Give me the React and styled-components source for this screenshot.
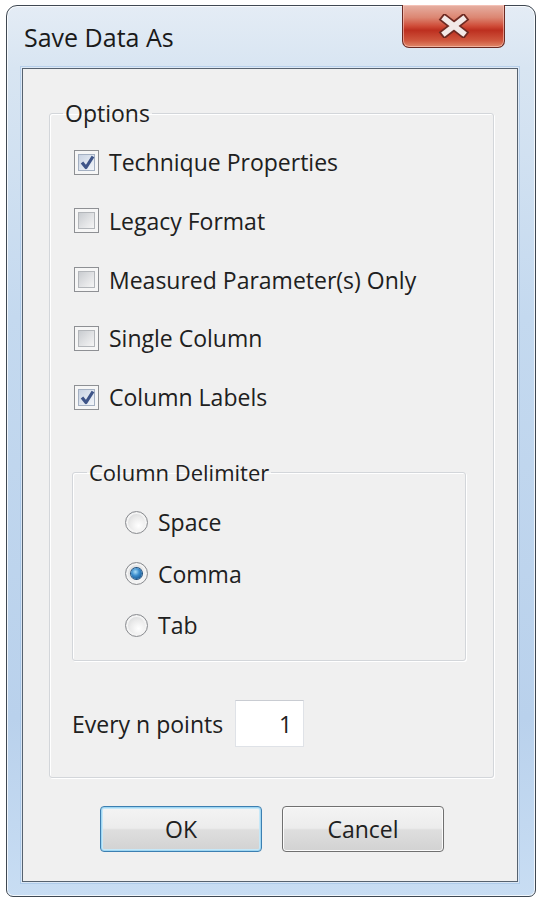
import React from "react";
import styled, { createGlobalStyle } from "styled-components";

const GlobalStyle = createGlobalStyle`
  html, body { margin: 0; padding: 0; background: #ffffff; }
  body { font-family: "Open Sans", "Noto Sans", "DejaVu Sans", sans-serif; color: #202020; }
  * { box-sizing: border-box; }
`;

const Window = styled.div`
  width: 530px;
  height: 892px;
  margin: 5px 0 0 6px;
  border: 1px solid #3f4852;
  border-radius: 11px 11px 7px 7px;
  background: linear-gradient(180deg, #e4ecf5 0%, #d8e5f2 7%, #c4d9ef 35%, #b9d1ec 80%, #c8ddf3 100%);
  box-shadow: inset 0 0 0 1px rgba(255, 255, 255, 0.75);
  padding: 0 17px 14px 15px;
  display: flex;
  flex-direction: column;
`;

const TitleBar = styled.div`
  height: 62px;
  display: flex;
  justify-content: space-between;
  align-items: flex-start;
`;

const Title = styled.div`
  font-size: 25px;
  line-height: 30px;
  margin: 16px 0 0 2px;
  color: #1a1a1a;
`;

const CloseButton = styled.div`
  width: 103px;
  height: 43px;
  margin: -1px 13px 0 0;
  border: 1px solid #6a2a22;
  border-top: none;
  border-radius: 0 0 7px 7px;
  background: linear-gradient(180deg, #e6b0a3 0%, #dc8672 30%, #cf4c38 50%, #bd2f1f 60%, #cf573e 85%, #e0896a 100%);
  box-shadow: inset 0 0 0 1px rgba(255, 210, 200, 0.55);
  display: flex;
  align-items: center;
  justify-content: center;
`;

const Client = styled.div`
  flex: 1;
  background: #f0f0f0;
  border: 1px solid #56626f;
  box-shadow: 0 0 0 1px rgba(255, 255, 255, 0.55), 0 0 0 2px rgba(150, 185, 225, 0.5);
  padding: 31px 23px 0 26px;
  display: flex;
  flex-direction: column;
`;

const GroupBox = styled.fieldset`
  margin: ${(p) => p.$margin || "0"};
  padding: ${(p) => p.$padding || "0"};
  border: 1px solid #d3d6da;
  border-radius: 3px;
  box-shadow: inset 1px 1px 0 #ffffff, 1px 1px 0 #ffffff;
  min-width: 0;
`;

const GroupLegend = styled.legend`
  margin-left: ${(p) => p.$indent}px;
  padding: 0 2px;
  font-size: ${(p) => p.$size || 23}px;
  line-height: 26px;
  color: #202020;
`;

const CheckList = styled.div`
  display: flex;
  flex-direction: column;
  gap: 28.75px;
  padding: 21px 0 0 24px;
`;

const OptionRow = styled.label`
  display: flex;
  align-items: center;
  height: 30px;
  gap: ${(p) => p.$gap}px;
  font-size: 23px;
  line-height: 30px;
  color: #202020;
`;

const CheckBox = styled.span`
  position: relative;
  width: 25px;
  height: 25px;
  flex: none;
  border: 1px solid #8e9094;
  background: #f6f6f6;
  &::before {
    content: "";
    position: absolute;
    inset: 3px;
    border: 1px solid ${(p) => (p.$checked ? "#a4b0c2" : "#b3b6ba")};
    background: ${(p) =>
      p.$checked
        ? "linear-gradient(135deg, #c9d3e3 0%, #e2e8f1 60%, #f2f5f9 100%)"
        : "linear-gradient(135deg, #c9ccd0 0%, #e2e3e5 55%, #f5f5f5 100%)"};
  }
  svg {
    position: absolute;
    left: 3px;
    top: 2px;
  }
`;

const DelimiterList = styled.div`
  display: flex;
  flex-direction: column;
  gap: 21.5px;
  padding: 22px 0 0 52px;
`;

const Radio = styled.span`
  position: relative;
  width: 23px;
  height: 23px;
  flex: none;
  border-radius: 50%;
  border: 1px solid #8a8c90;
  background: radial-gradient(circle at 60% 65%, #ffffff 0%, #ebebeb 45%, #c9cbce 100%);
  box-shadow: inset 0 0 0 2px #f4f4f4;
  &::after {
    content: "";
    position: absolute;
    left: 5px;
    top: 5px;
    width: 11px;
    height: 11px;
    border-radius: 50%;
    display: ${(p) => (p.$checked ? "block" : "none")};
    background: radial-gradient(circle at 40% 35%, #a9ddf8 0%, #3a8ccc 40%, #1d5f9a 75%, #143f6a 100%);
    box-shadow: 0 0 0 1px #1e4e7c;
  }
`;

const PointsRow = styled.div`
  display: flex;
  align-items: center;
  height: 47px;
  margin: 39px 0 30px 22px;
  gap: 12px;
  font-size: 23px;
`;

const NumberField = styled.div`
  width: 69px;
  height: 47px;
  background: #ffffff;
  border: 1px solid #dfe2e7;
  border-top-color: #c9ccd2;
  display: flex;
  align-items: center;
  justify-content: flex-end;
  padding-right: 11px;
  font-size: 23px;
`;

const ButtonBar = styled.div`
  display: flex;
  gap: 20px;
  margin: 28px 0 0 51px;
`;

const Button = styled.div`
  width: 162px;
  height: 46px;
  border-radius: 4px;
  border: 1px solid ${(p) => (p.$default ? "#3c7fb1" : "#707070")};
  background: linear-gradient(180deg, #f4f4f4 0%, #ececec 48%, #dedede 52%, #d2d2d2 100%);
  box-shadow: ${(p) =>
    p.$default
      ? "inset 0 0 0 1px #9fd6f2, inset 0 0 0 2px #c6e8f8"
      : "inset 0 0 0 1px #fbfbfb"};
  display: flex;
  align-items: center;
  justify-content: center;
  font-size: 23px;
  color: #202020;
`;

const CheckMark = () => (
  <svg width="19" height="19" viewBox="0 0 19 19">
    <path d="M4 9.5 L8 14.5 L15 3.5" fill="none" stroke="#3e5488" strokeWidth="3.2" strokeLinejoin="round" />
  </svg>
);

const CloseGlyph = () => (
  <svg width="32" height="24" viewBox="0 0 32 24">
    <g strokeLinecap="square">
      <path d="M7 5 L25 19 M25 5 L7 19" stroke="#6e2a22" strokeWidth="9" />
      <path d="M7 5 L25 19 M25 5 L7 19" stroke="#f3e9e7" strokeWidth="5.5" />
    </g>
  </svg>
);

const checkOptions = [
  { label: "Technique Properties", checked: true },
  { label: "Legacy Format", checked: false },
  { label: "Measured Parameter(s) Only", checked: false },
  { label: "Single Column", checked: false },
  { label: "Column Labels", checked: true },
];

const delimiters = [
  { label: "Space", checked: false },
  { label: "Comma", checked: true },
  { label: "Tab", checked: false },
];

export default function App() {
  return (
    <>
      <GlobalStyle />
      <Window>
        <TitleBar>
          <Title>Save Data As</Title>
          <CloseButton>
            <CloseGlyph />
          </CloseButton>
        </TitleBar>
        <Client>
          <GroupBox>
            <GroupLegend $indent={13}>Options</GroupLegend>
            <CheckList>
              {checkOptions.map((o) => (
                <OptionRow key={o.label} $gap={10}>
                  <CheckBox $checked={o.checked}>{o.checked && <CheckMark />}</CheckBox>
                  {o.label}
                </OptionRow>
              ))}
            </CheckList>
            <GroupBox $margin="47px 27px 0 22px" $padding="0 0 20px 0">
              <GroupLegend $indent={14} $size={22}>Column Delimiter</GroupLegend>
              <DelimiterList>
                {delimiters.map((d) => (
                  <OptionRow key={d.label} $gap={10}>
                    <Radio $checked={d.checked} />
                    {d.label}
                  </OptionRow>
                ))}
              </DelimiterList>
            </GroupBox>
            <PointsRow>
              Every n points
              <NumberField>1</NumberField>
            </PointsRow>
          </GroupBox>
          <ButtonBar>
            <Button $default>OK</Button>
            <Button>Cancel</Button>
          </ButtonBar>
        </Client>
      </Window>
    </>
  );
}
